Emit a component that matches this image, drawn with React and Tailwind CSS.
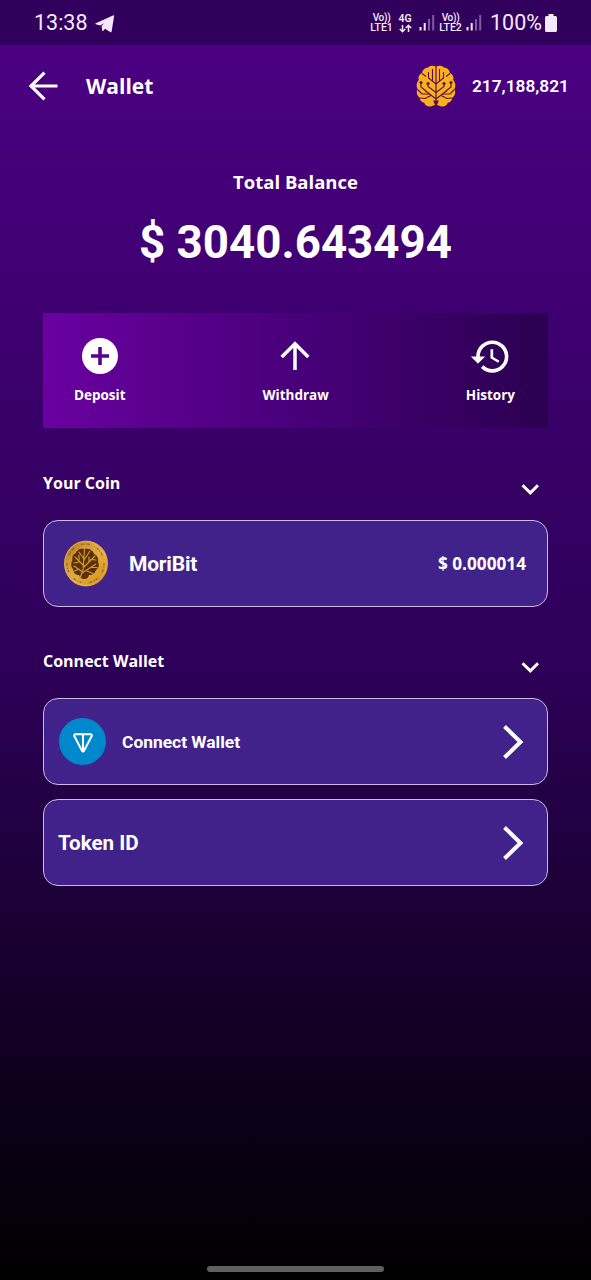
import React from "react";

const OPEN = "font-['Open_Sans','Noto_Sans',sans-serif]";
const ROBOTO = "font-[Roboto,sans-serif]";

function Signal() {
  return (
    <svg width="16" height="17" viewBox="0 0 16 17" fill="#f6e8fb">
      <rect x="0.5" y="13" width="2" height="3.5" />
      <rect x="4.7" y="9" width="2" height="7.5" />
      <rect x="9" y="5" width="2" height="11.5" opacity="0.4" />
      <rect x="13.2" y="1" width="2" height="15.5" opacity="0.4" />
    </svg>
  );
}

function Volte({ label }) {
  return (
    <div className="flex w-[23px] flex-col items-center text-[10.5px] leading-[10px] font-medium text-[#f6e8fb]">
      <span className="text-[10px] tracking-[-0.3px]">Vo))</span>
      <span className="whitespace-nowrap">{label}</span>
    </div>
  );
}

function StatusBar() {
  return (
    <div className={`flex h-[45px] shrink-0 items-center bg-[#31005d] pl-[34px] text-[#f6e8fb] ${ROBOTO}`}>
      <span className="w-[53px] text-[21.5px] leading-none whitespace-nowrap">13:38</span>
      <svg className="mt-[2px] ml-[8px]" width="20" height="18" viewBox="0 0 20 18" fill="#f6e8fb">
        <path d="M0.800 8.300 18 0.500c.8-.4 1.200 0 1.100.8l-2.500 15.200c-.2.900-.8 1-1.500.6l-5-3.300-1.800 2c-.5.400-1 .2-1.100-.4l-.6-4.400 2.500-2.700-4 2.200-4.300-1.300c-.700-.300-.700-.600 0-.900z" />
      </svg>
      <div className="ml-[255px] flex items-center">
        <Volte label="LTE1" />
        <div className="ml-[5px] flex w-[14px] flex-col items-center pt-[1px]">
          <span className="text-[10.5px] leading-[10px] font-semibold">4G</span>
          <svg width="13" height="9" viewBox="0 0 13 9" fill="none" stroke="#f6e8fb" strokeWidth="1.5">
            <path d="M3.500 1v6.500M0.800 5l2.700 2.700L6.200 5M9.500 8V1.500M6.800 4l2.700-2.700L12.200 4" />
          </svg>
        </div>
        <div className="ml-[7px]"><Signal /></div>
        <div className="ml-[4px]"><Volte label="LTE2" /></div>
        <div className="ml-[4px]"><Signal /></div>
      </div>
      <span className="ml-[8px] w-[51px] text-[21.5px] leading-none whitespace-nowrap">100%</span>
      <svg className="ml-[4px]" width="12" height="18" viewBox="0 0 12 18" fill="#f6e8fb">
        <path d="M3.500 0h5v2H10.500a1.500 1.500 0 0 1 1.500 1.500v13a1.500 1.500 0 0 1-1.500 1.500h-9A1.500 1.500 0 0 1 0 16.500v-13A1.500 1.500 0 0 1 1.500 2h2z" />
      </svg>
    </div>
  );
}

function Brain() {
  return (
    <svg width="40" height="42" viewBox="0 0 40 42">
      <path
        fill="#fbb01c"
        d="M20 1.500C17 0 13.500.5 12 2.500 8.500 2.800 6.500 5 6 8 3 9.500 2 12 2.800 15 .5 17.500 0 21 1.500 24 0 27 1 31 3.500 32.500 4 36 6 37.500 8.200 37.800 9 41 13 42.500 16 41c2.500-.5 3.500-1.500 4-3 .5 1.500 1.500 2.500 4 3 3 1.500 7 0 7.800-3.200 2.200-.3 4.200-1.800 4.700-5.300 2.500-1.500 3.500-5.500 2-8.500 1.500-3 1-6.500-1.300-9 .8-3-.2-5.500-3.200-7-.5-3-2.500-5.200-6-5.500C26.500.5 23 0 20 1.500z"
      />
      <g fill="none" stroke="#5a1145" strokeWidth="1.100">
        <path d="M20 0v42" strokeWidth="1.200" />
        <path d="M20 34 9 25.500M20 34l11-8.500M20 27.500l-8-6V18M20 27.500l8-6V18M20 19l-7.500-6V7M20 19l7.500-6V7M16.500 16V4M23.500 16V4" />
        <path d="M1.500 24.500 6 29h8M38.500 24.500 34 29h-8M5 18v4l5 4M35 18v4l-5 4M3.500 33 9 33.500l6-3M36.500 33 31 33.500l-6-3M6 8.500l4 3M34 8.500l-4 3" />
      </g>
      <g fill="#5a1145">
        <circle cx="5" cy="17.500" r="1.500" />
        <circle cx="35" cy="17.500" r="1.500" />
        <circle cx="12" cy="18.500" r="1.600" />
        <circle cx="28" cy="18.500" r="1.600" />
        <path d="M20 42 17 35.500h6z" />
      </g>
    </svg>
  );
}

function Coin() {
  return (
    <svg width="46" height="48" viewBox="0 0 46 48">
      <defs>
        <linearGradient id="gold" x1="0" y1="0" x2="1" y2="1">
          <stop offset="0" stopColor="#a8691a" />
          <stop offset="0.300" stopColor="#d39a35" />
          <stop offset="0.550" stopColor="#e3ad45" />
          <stop offset="0.800" stopColor="#d89a24" />
          <stop offset="1" stopColor="#a86a13" />
        </linearGradient>
      </defs>
      <ellipse cx="23" cy="23.500" rx="22" ry="23" fill="url(#gold)" />
      <ellipse cx="22.500" cy="23.500" rx="20.800" ry="21.800" fill="none" stroke="#f0c765" strokeWidth="0.700" opacity="0.700" />
      <ellipse cx="22.500" cy="23.500" rx="18.500" ry="19.500" fill="none" stroke="#7a4a10" strokeWidth="1.400" strokeDasharray="2 1.200 1 1.700 3 8" opacity="0.600" />
      <path fill="#5a3008" d="M21 9c-4-1-7 1-8 4-3 1-4 4-3.500 7-2 3-1.500 7 .5 9 0 4 3 6 6 6 1 3 3 4.500 5.500 4 3 0 4-2 4.500-4 4 0 6-2 7-5 3-2 3.500-5 2-8 1-4-1-7-4-8-1-4-5-6-10-5z" />
      <g fill="none" stroke="#d89b31" strokeWidth="1.150" strokeLinecap="round">
        <path d="M17 38 20 30 21.500 9.500M19 33 33 24M19.500 32l-8.500-6M21 27l11-11M21 26l-9-9M21 20l6-9M21 19l-5-7" />
        <path d="M26 22V17M28 27.500h6M15 29.500l-5 2M16 22l-5 1M24 31l6 2.500M28 19.500l5 .5M16 20V15" />
      </g>
    </svg>
  );
}

function Ton() {
  return (
    <div className="flex size-[47px] items-center justify-center rounded-full bg-[#0088cc]">
      <svg className="mt-[3px]" width="20" height="20" viewBox="0 0 20 20" fill="none" stroke="white" strokeWidth="2" strokeLinejoin="round">
        <path d="M2.500 1.200h15c1.200 0 1.700 1.100 1.100 2.100L11 17.800c-.5.900-1.500.9-2 0L1.400 3.300C.8 2.300 1.300 1.200 2.500 1.200zM10 1.200V18" />
      </svg>
    </div>
  );
}

function Action({ label, children }) {
  return (
    <div className="flex flex-col items-center">
      <div className="flex h-[40px] items-center">{children}</div>
      <span className={`mt-[9px] text-[13.5px] leading-[20px] font-bold ${OPEN}`}>{label}</span>
    </div>
  );
}

function SectionTitle({ children }) {
  return (
    <div className="flex h-[26px] items-start justify-between pr-[8px]">
      <h2 className={`text-[16px] leading-[22px] font-bold ${OPEN}`}>{children}</h2>
      <svg className="mt-[11px]" width="20" height="14" viewBox="0 0 20 14" fill="none" stroke="white" strokeWidth="3">
        <path d="M2.500 2.200 10.300 9.800 18 2.200" />
      </svg>
    </div>
  );
}

function Card({ className, children }) {
  return (
    <div className={`flex h-[87px] shrink-0 items-center rounded-[15px] border border-[#cdb9e2] bg-[#41228b] ${className}`}>
      {children}
    </div>
  );
}

function Next() {
  return (
    <svg className="ml-auto" width="22" height="36" viewBox="0 0 22 36" fill="none" stroke="white" strokeWidth="4">
      <path d="M2.500 2.500 18.500 18 2.500 33.500" />
    </svg>
  );
}

export default function App() {
  return (
    <div className="flex h-[1280px] w-[591px] flex-col overflow-hidden bg-black text-white">
      <StatusBar />
      <main className="flex flex-1 flex-col bg-linear-to-b/srgb from-[#4b0082] via-[#2e0059] to-black px-[43px]">
        <header className="-mx-[43px] flex h-[82px] shrink-0 items-center pr-[22px] pl-[28px]">
          <svg width="30" height="30" viewBox="0 0 30 30" fill="none" stroke="white" strokeWidth="3.200">
            <path d="M29.500 15H3M16.500 1.700 3 15l13.500 13.300" />
          </svg>
          <h1 className={`ml-[28px] text-[21px] leading-none font-bold ${OPEN}`}>Wallet</h1>
          <div className="ml-auto flex items-center gap-[16px]">
            <Brain />
            <span className={`mt-[2px] w-[97px] text-[17.300px] font-semibold whitespace-nowrap ${ROBOTO}`}>217,188,821</span>
          </div>
        </header>

        <section className="flex flex-col items-center pt-[42px]">
          <p className={`text-[18.500px] leading-[26px] font-bold ${OPEN}`}>Total Balance</p>
          <p className={`mt-[19px] text-[45.700px] leading-[58px] font-bold whitespace-nowrap ${ROBOTO}`}>$ 3040.643494</p>
        </section>

        <section className="mt-[41px] flex h-[115px] shrink-0 justify-between bg-linear-to-r/srgb from-[#6a00a0] via-[#48007a] to-[#2b0050] pr-[33px] pl-[31px] pt-[23px]">
          <Action label="Deposit">
            <svg width="36" height="36" viewBox="0 0 36 36">
              <circle cx="18" cy="18" r="18" fill="white" />
              <path d="M18 9v18M9 18h18" stroke="#5c0091" strokeWidth="3.600" />
            </svg>
          </Action>
          <Action label="Withdraw">
            <svg className="-ml-[1px]" width="30" height="30" viewBox="0 0 30 30" fill="none" stroke="white" strokeWidth="3.500">
              <path d="M15 29V3M1.700 16 15 2.700 28.300 16" />
            </svg>
          </Action>
          <Action label="History">
            <svg className="-mx-[2px] shrink-0" width="43" height="43" viewBox="0 0 24 24" fill="white">
              <path d="M13 3a9 9 0 0 0-9 9H1l3.890 3.890.070.140L9 12H6c0-3.870 3.130-7 7-7s7 3.130 7 7-3.130 7-7 7c-1.930 0-3.680-.790-4.940-2.060l-1.420 1.420A8.954 8.954 0 0 0 13 21a9 9 0 0 0 0-18zm-1 5v5l4.280 2.540.720-1.210-3.500-2.080V8H12z" />
            </svg>
          </Action>
        </section>

        <section className="mt-[44px]">
          <SectionTitle>Your Coin</SectionTitle>
          <Card className="mt-[22px] pr-[21px] pl-[19px]">
            <Coin />
            <span className={`mt-[3px] ml-[20px] text-[21px] font-bold tracking-[-0.2px] ${ROBOTO}`}>MoriBit</span>
            <span className={`mt-[1px] ml-auto text-[17.200px] font-bold ${OPEN}`}>$ 0.000014</span>
          </Card>
        </section>

        <section className="mt-[43px]">
          <SectionTitle>Connect Wallet</SectionTitle>
          <Card className="mt-[22px] pr-[23px] pl-[15px]">
            <Ton />
            <span className={`mt-[1px] ml-[16px] text-[17.400px] font-bold ${ROBOTO}`}>Connect Wallet</span>
            <Next />
          </Card>
          <Card className="mt-[14px] pr-[23px] pl-[14px]">
            <span className={`mt-[2px] text-[20.600px] font-bold ${ROBOTO}`}>Token ID</span>
            <Next />
          </Card>
        </section>

        <div className="mt-auto mb-[8px] h-[6px] w-[177px] self-center rounded-full bg-[#606060]" />
      </main>
    </div>
  );
}
